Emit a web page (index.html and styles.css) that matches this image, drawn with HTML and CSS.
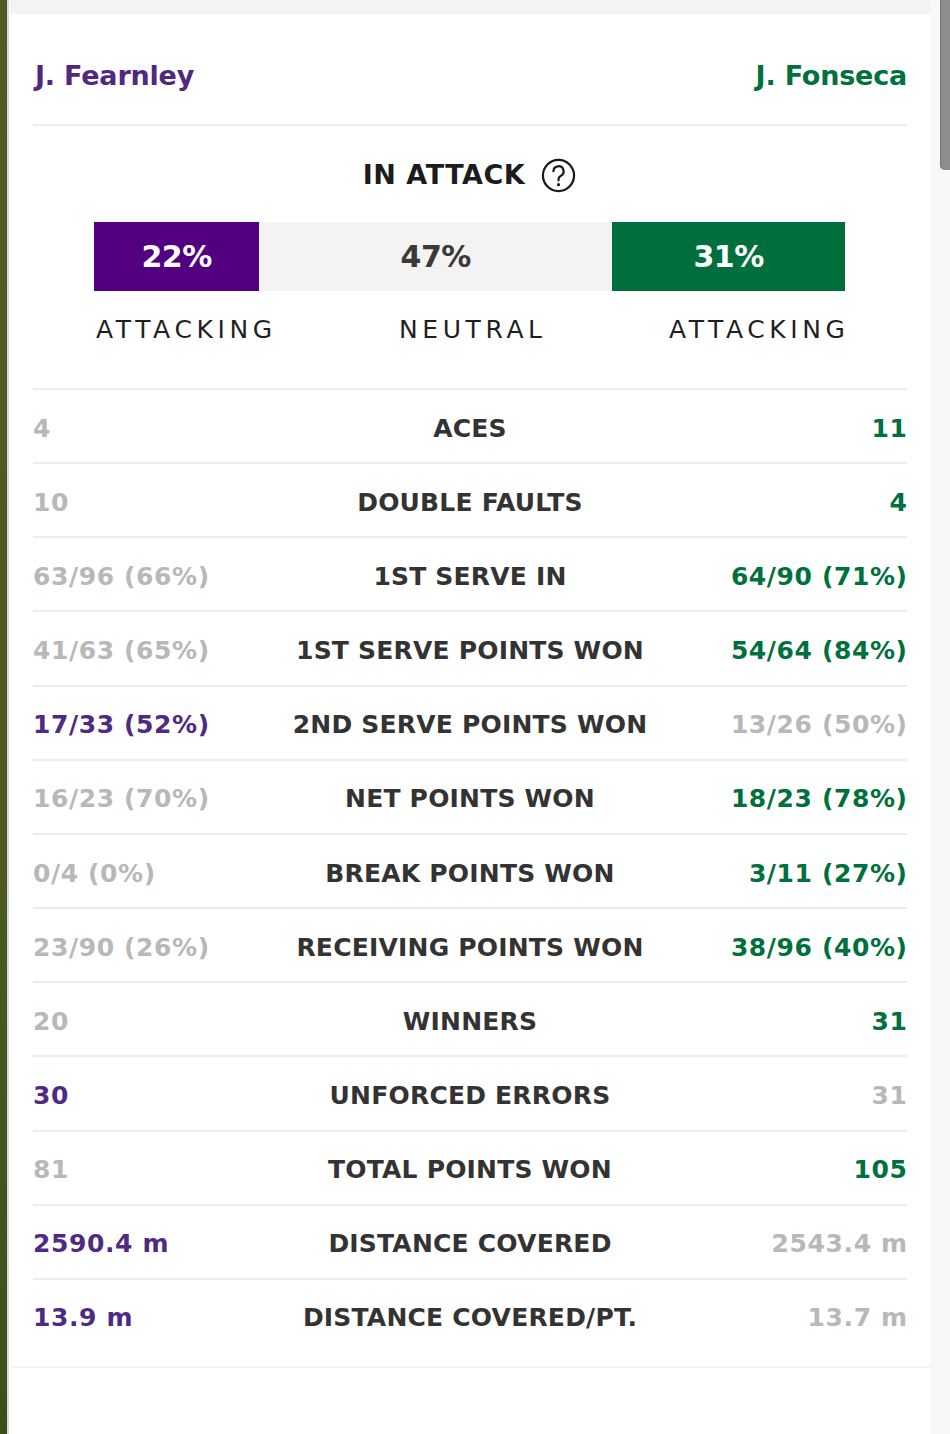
FILE: index.html
```html
<!DOCTYPE html>
<html lang="en">
<head>
<meta charset="utf-8">
<title>Match stats</title>
<link rel="stylesheet" href="styles.css">
</head>
<body>
<div class="page">
  <div class="grass"></div>
  <div class="edge"></div>
  <main class="panel">
    <div class="topband"></div>
    <div class="content">
      <div class="names">
        <span class="name p1">J. Fearnley</span>
        <span class="name p2">J. Fonseca</span>
      </div>
      <section class="attack">
        <h2 class="attack-title">IN ATTACK
          <svg class="help" viewBox="0 0 36 36" width="35" height="35" aria-hidden="true">
            <circle cx="18" cy="18" r="16" fill="none" stroke="#1a1a1a" stroke-width="2.3"/>
            <path d="M12.8 13.6 a5.2 5.2 0 1 1 7.4 4.8 c-1.6 0.8 -2.2 1.8 -2.2 3.8 v0.8" fill="none" stroke="#1a1a1a" stroke-width="2.3" stroke-linecap="round"/>
            <circle cx="18" cy="27.4" r="1.6" fill="#1a1a1a"/>
          </svg>
        </h2>
        <div class="bar">
          <div class="seg seg-p1" style="width:22%">22%</div>
          <div class="seg seg-n" style="width:47%">47%</div>
          <div class="seg seg-p2" style="width:31%">31%</div>
        </div>
        <div class="bar-labels">
          <span>ATTACKING</span>
          <span>NEUTRAL</span>
          <span>ATTACKING</span>
        </div>
      </section>
      <div class="stats">
        <div class="row"><span class="v lo">4</span><span class="lbl">ACES</span><span class="v r g">11</span></div>
        <div class="row"><span class="v lo">10</span><span class="lbl">DOUBLE FAULTS</span><span class="v r g">4</span></div>
        <div class="row"><span class="v lo">63/96 (66%)</span><span class="lbl">1ST SERVE IN</span><span class="v r g">64/90 (71%)</span></div>
        <div class="row"><span class="v lo">41/63 (65%)</span><span class="lbl">1ST SERVE POINTS WON</span><span class="v r g">54/64 (84%)</span></div>
        <div class="row"><span class="v p">17/33 (52%)</span><span class="lbl">2ND SERVE POINTS WON</span><span class="v r lo">13/26 (50%)</span></div>
        <div class="row"><span class="v lo">16/23 (70%)</span><span class="lbl">NET POINTS WON</span><span class="v r g">18/23 (78%)</span></div>
        <div class="row"><span class="v lo">0/4 (0%)</span><span class="lbl">BREAK POINTS WON</span><span class="v r g">3/11 (27%)</span></div>
        <div class="row"><span class="v lo">23/90 (26%)</span><span class="lbl">RECEIVING POINTS WON</span><span class="v r g">38/96 (40%)</span></div>
        <div class="row"><span class="v lo">20</span><span class="lbl">WINNERS</span><span class="v r g">31</span></div>
        <div class="row"><span class="v p">30</span><span class="lbl">UNFORCED ERRORS</span><span class="v r lo">31</span></div>
        <div class="row"><span class="v lo">81</span><span class="lbl">TOTAL POINTS WON</span><span class="v r g">105</span></div>
        <div class="row"><span class="v p">2590.4 m</span><span class="lbl">DISTANCE COVERED</span><span class="v r lo">2543.4 m</span></div>
        <div class="row"><span class="v p">13.9 m</span><span class="lbl">DISTANCE COVERED/PT.</span><span class="v r lo">13.7 m</span></div>
      </div>
    </div>
    <div class="panel-foot"></div>
  </main>
  <div class="track"><div class="thumb"></div></div>
</div>
</body>
</html>
```

FILE: styles.css
```css
html, body {
  margin: 0;
  padding: 0;
  height: 100%;
}
body {
  font-family: "DejaVu Sans", "Liberation Sans", sans-serif;
  color: #2b2b2b;
  background: #ffffff;
}
.page {
  display: flex;
  height: 1434px;
  overflow: hidden;
}
.grass {
  width: 7px;
  flex: none;
  background: linear-gradient(180deg, #4e5b24 0%, #4a5a22 60%, #3f4f1c 100%);
}
.edge {
  width: 2px;
  flex: none;
  background: #d9d9d9;
}
.panel {
  width: 921px;
  flex: none;
  background: #ffffff;
  display: flex;
  flex-direction: column;
}
.topband {
  height: 14px;
  background: #f3f3f3;
  margin-left: 1px;
}
.content {
  padding: 0 23px 0 24px;
}
.names {
  display: flex;
  justify-content: space-between;
  align-items: center;
  padding: 46px 0 32px;
  border-bottom: 2px solid #ececec;
}
.name {
  font-size: 27px;
  font-weight: 700;
  line-height: 32px;
  letter-spacing: -0.2px;
}
.p1 { color: #52287f; padding-left: 2px; }
.p2 { color: #00703c; }

.attack {
  padding: 29px 62px 40px 61px;
}
.attack-title {
  margin: 0;
  display: flex;
  justify-content: center;
  align-items: center;
  gap: 16px;
  font-size: 27px;
  font-weight: 700;
  color: #1c1c1c;
  line-height: 40px;
  letter-spacing: 0.5px;
}
.help {
  display: block;
}
.bar {
  display: flex;
  height: 69px;
  margin-top: 27px;
  background: #f3f3f3;
}
.seg {
  display: flex;
  align-items: center;
  justify-content: center;
  font-size: 30px;
  font-weight: 700;
  letter-spacing: -0.5px;
}
.seg-p1 { background: #52007f; color: #ffffff; }
.seg-n { background: #f3f3f3; color: #3a3a3a; }
.seg-p2 { background: #006f3b; color: #ffffff; }
.bar-labels {
  display: flex;
  justify-content: space-between;
  margin-top: 21px;
  font-size: 25px;
  font-weight: 400;
  letter-spacing: 4.6px;
  line-height: 36px;
  color: #1f1f1f;
  padding-left: 2px;
  margin-right: -4.6px;
}

.stats {
  display: flex;
  flex-direction: column;
}
.row {
  box-sizing: border-box;
  display: grid;
  grid-template-columns: 1fr auto 1fr;
  align-items: center;
  height: 74.17px;
  padding-top: 4px;
  border-top: 2px solid #ececec;
  font-size: 25px;
  font-weight: 700;
}
.v { white-space: nowrap; letter-spacing: 0.6px; }
.v.r { text-align: right; margin-right: -0.6px; }
.lbl {
  text-align: center;
  color: #333333;
  letter-spacing: 0.2px;
}
.lo { color: #b8b8b8; }
.p { color: #4e2a84; }
.g { color: #00703c; }

.panel-foot {
  margin-top: 14px;
  border-top: 2px solid #f3f3f3;
  flex: 1;
  margin-left: 2px;
}

.track {
  width: 20px;
  flex: none;
  background: #f8f8f8;
  position: relative;
}
.thumb {
  position: absolute;
  right: 0;
  top: 0;
  width: 10px;
  height: 170px;
  background: #8d8d8d;
  border-radius: 0 0 0 5px;
  box-shadow: inset 1px 0 0 #777;
}
```
